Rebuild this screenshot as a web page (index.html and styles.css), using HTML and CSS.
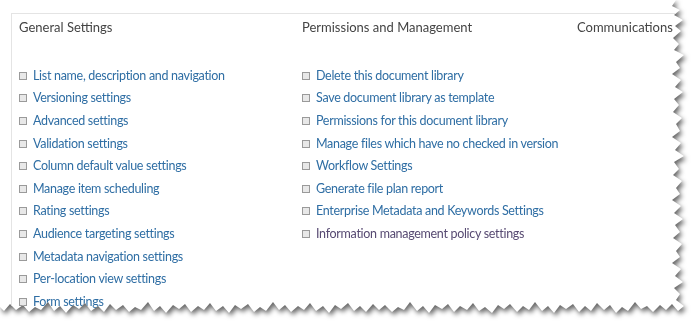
FILE: index.html
```html
<!DOCTYPE html>
<html lang="en">
<head>
    <meta charset="UTF-8">
    <meta name="viewport" content="width=device-width, initial-scale=1.0">
    <title>Document Library Settings</title>
    <link rel="stylesheet" href="styles.css">
</head>
<body>
    <div class="sheetShadow">
        <div class="sheet">
            <div class="box">
                <div class="section">
                    <h3>General Settings</h3>
                    <ul>
                        <li><a href="#">List name, description and navigation</a></li>
                        <li><a href="#">Versioning settings</a></li>
                        <li><a href="#">Advanced settings</a></li>
                        <li><a href="#">Validation settings</a></li>
                        <li><a href="#">Column default value settings</a></li>
                        <li><a href="#">Manage item scheduling</a></li>
                        <li><a href="#">Rating settings</a></li>
                        <li><a href="#">Audience targeting settings</a></li>
                        <li><a href="#">Metadata navigation settings</a></li>
                        <li><a href="#">Per-location view settings</a></li>
                        <li><a href="#">Form settings</a></li>
                    </ul>
                </div>
                <div class="section">
                    <h3>Permissions and Management</h3>
                    <ul>
                        <li><a href="#">Delete this document library</a></li>
                        <li><a href="#">Save document library as template</a></li>
                        <li><a href="#">Permissions for this document library</a></li>
                        <li><a href="#">Manage files which have no checked in version</a></li>
                        <li><a href="#">Workflow Settings</a></li>
                        <li><a href="#">Generate file plan report</a></li>
                        <li><a href="#">Enterprise Metadata and Keywords Settings</a></li>
                        <li><a href="#" class="visited">Information management policy settings</a></li>
                    </ul>
                </div>
                <div class="section">
                    <h3>Communications</h3>
                </div>
            </div>
        </div>
    </div>
</body>
</html>
```

FILE: styles.css
```css
* {
    box-sizing: border-box;
}

body {
    margin: 0;
    background-color: #fff;
    font-family: Lato, "Open Sans", sans-serif;
    overflow: hidden;
}

/* the torn paper edge, shadow follows the clip */
.sheetShadow {
    width: 700px;
    height: 336px;
    filter: drop-shadow(2px 3px 2.5px rgba(0, 0, 0, .6));
}

.sheet {
    width: 700px;
    height: 336px;
    background-color: #fff;
    overflow: hidden;
    clip-path: polygon(0 0, 676px 0, 672px 6px, 680px 10px, 674px 15px, 683px 20px, 675px 26px, 681px 31px, 673px 38px, 679px 44px, 674px 50px, 684px 55px, 676px 62px, 680px 68px, 672px 74px, 681px 80px, 675px 87px, 683px 92px, 674px 99px, 679px 105px, 673px 112px, 682px 118px, 676px 124px, 680px 131px, 672px 137px, 681px 143px, 675px 150px, 684px 156px, 674px 162px, 679px 169px, 673px 175px, 682px 181px, 676px 188px, 680px 194px, 672px 200px, 681px 206px, 674px 213px, 683px 219px, 675px 225px, 680px 232px, 673px 238px, 682px 244px, 676px 251px, 680px 257px, 672px 263px, 681px 269px, 675px 276px, 683px 282px, 674px 288px, 680px 294px, 676px 300px, 684px 306px, 678px 311px, 672px 304px, 666px 310px, 660px 305px, 653px 312px, 647px 306px, 641px 309px, 635px 302px, 628px 311px, 622px 307px, 616px 313px, 610px 305px, 604px 310px, 597px 303px, 591px 311px, 585px 306px, 579px 312px, 573px 304px, 566px 309px, 560px 305px, 554px 313px, 548px 306px, 542px 311px, 535px 302px, 529px 310px, 523px 306px, 517px 312px, 510px 304px, 504px 309px, 498px 305px, 492px 313px, 485px 307px, 479px 311px, 473px 303px, 467px 310px, 460px 306px, 454px 312px, 448px 304px, 442px 309px, 435px 305px, 429px 313px, 423px 306px, 417px 311px, 410px 302px, 404px 310px, 398px 307px, 392px 312px, 385px 305px, 379px 310px, 373px 304px, 366px 312px, 360px 306px, 354px 311px, 348px 303px, 341px 309px, 335px 305px, 329px 313px, 323px 306px, 316px 311px, 310px 303px, 304px 310px, 298px 306px, 291px 312px, 285px 305px, 279px 310px, 273px 302px, 266px 311px, 260px 307px, 254px 312px, 248px 304px, 241px 309px, 235px 305px, 229px 313px, 223px 306px, 216px 311px, 210px 303px, 204px 310px, 198px 306px, 191px 312px, 185px 304px, 179px 309px, 173px 305px, 166px 313px, 160px 306px, 154px 311px, 148px 302px, 141px 310px, 135px 307px, 129px 312px, 123px 305px, 116px 310px, 110px 304px, 104px 312px, 98px 306px, 91px 311px, 85px 303px, 79px 309px, 73px 305px, 66px 313px, 60px 306px, 54px 311px, 48px 302px, 41px 310px, 35px 307px, 29px 312px, 23px 305px, 16px 310px, 10px 304px, 4px 311px, 0 307px);
}

.box {
    display: grid;
    grid-template-columns: 283px 275px 200px;
    margin: 13px 0 0 11px;
    padding: 4px 0 0 7px;
    height: 330px;
    border-top: 1px solid #e4e4e4;
    border-left: 1px solid #e4e4e4;
}

.section h3 {
    margin: 0 0 28px 0;
    font-size: 13px;
    font-weight: normal;
    line-height: 18px;
    color: #444;
    white-space: nowrap;
}

.section ul {
    list-style: none;
    margin: 0;
    padding: 0;
}

.section li {
    display: flex;
    align-items: center;
    gap: 6px;
    height: 22.6px;
    white-space: nowrap;
}

.section li::before {
    content: '';
    width: 6px;
    height: 6px;
    margin-top: 1px;
    border: 1px solid #9a9a9a;
    background-color: #e8e8e8;
    flex-shrink: 0;
}

.section a {
    font-size: 12.5px;
    letter-spacing: -0.3px;
    color: #2f6ea4;
    text-decoration: none;
}

.section a.visited {
    color: #574a72;
}
```
